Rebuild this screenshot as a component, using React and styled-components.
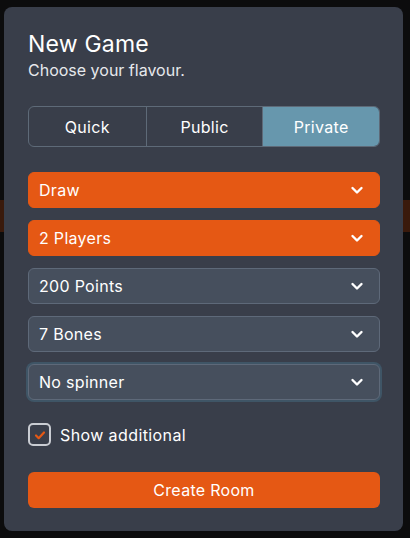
import React, { useState } from "react";
import styled, { createGlobalStyle } from "styled-components";

const GlobalStyle = createGlobalStyle`
    html, body {
        margin: 0;
        background: #0c0c0d;
        font-family: Inter, "Noto Sans", sans-serif;
    }
`;

const Backdrop = styled.div`
    width: 410px;
    height: 538px;
    padding: 7px 7px 7px 4px;
    box-sizing: border-box;
    background: linear-gradient(to bottom, transparent 200px, #3a1a0c 200px, #3a1a0c 232px, transparent 232px);
`;

const Modal = styled.div`
    background: #393e4a;
    border-radius: 8px;
    height: 524px;
    box-sizing: border-box;
    padding: 22px 23px 0 24px;
    display: flex;
    flex-direction: column;
    color: #fff;
`;

const Title = styled.h2`
    font-size: 23px;
    font-weight: 400;
    margin: 0;
    line-height: 30px;
    letter-spacing: 0.2px;
`;

const Subtitle = styled.p`
    font-size: 16px;
    color: #e6e8ec;
    margin: 0 0 25px 0;
    line-height: 22px;
`;

const Tabs = styled.div`
    display: grid;
    grid-template-columns: repeat(3, 1fr);
    border: 1px solid #5e6a78;
    border-radius: 6px;
    overflow: hidden;
    height: 41px;
    box-sizing: border-box;
    margin-bottom: 25px;
`;

const Tab = styled.button`
    border: none;
    border-left: ${p => (p.$first ? "none" : "1px solid #5e6a78")};
    background: ${p => (p.$active ? "#6797ad" : "transparent")};
    color: #fff;
    font-family: inherit;
    font-size: 16px;
    letter-spacing: 0.3px;
    cursor: pointer;
`;

const Fields = styled.div`
    display: flex;
    flex-direction: column;
    gap: 12px;
`;

const Select = styled.div`
    height: 36px;
    box-sizing: border-box;
    border-radius: 6px;
    padding: 0 15px 0 10px;
    display: flex;
    align-items: center;
    justify-content: space-between;
    font-size: 16px;
    letter-spacing: 0.3px;
    background: ${p => (p.$accent ? "#e55814" : "#464f5d")};
    border: 1px solid ${p => (p.$accent ? "#e55814" : "#5e6979")};
    box-shadow: ${p => (p.$focus ? "0 0 0 2px #3f5566" : "none")};
`;

const Check = styled.label`
    display: flex;
    align-items: center;
    gap: 9px;
    margin-top: 23px;
    font-size: 16px;
    letter-spacing: 0.4px;
`;

const Box = styled.span`
    width: 19px;
    height: 19px;
    border: 2px solid #c9ccd2;
    border-radius: 5px;
    display: flex;
    align-items: center;
    justify-content: center;
`;

const Button = styled.button`
    margin-top: 26px;
    height: 36px;
    border: none;
    border-radius: 6px;
    background: #e55814;
    color: #fff;
    font-family: inherit;
    font-size: 16px;
    letter-spacing: 0.3px;
`;

const Chevron = () => (
    <svg width="14" height="14" viewBox="0 0 14 14">
        <path d="M2.5 5l4.5 4.5L11.5 5" fill="none" stroke="#fff" strokeWidth="2.4" strokeLinecap="round" strokeLinejoin="round" />
    </svg>
);

const fields = [
    { label: "Draw", accent: true },
    { label: "2 Players", accent: true },
    { label: "200 Points" },
    { label: "7 Bones" },
    { label: "No spinner", focus: true },
];

const App = () => {
    const [mode, setMode] = useState("Private");
    return (
        <Backdrop>
            <GlobalStyle />
            <Modal>
                <Title>New Game</Title>
                <Subtitle>Choose your flavour.</Subtitle>
                <Tabs>
                    {["Quick", "Public", "Private"].map((t, i) => (
                        <Tab key={t} $first={i === 0} $active={mode === t} onClick={() => setMode(t)}>
                            {t}
                        </Tab>
                    ))}
                </Tabs>
                <Fields>
                    {fields.map(f => (
                        <Select key={f.label} $accent={f.accent} $focus={f.focus}>
                            {f.label}
                            <Chevron />
                        </Select>
                    ))}
                </Fields>
                <Check>
                    <Box>
                        <svg width="14" height="14" viewBox="0 0 14 14">
                            <path d="M3 7.5l2.7 2.7L11 4.5" fill="none" stroke="#e55814" strokeWidth="2.2" strokeLinecap="round" strokeLinejoin="round" />
                        </svg>
                    </Box>
                    Show additional
                </Check>
                <Button>Create Room</Button>
            </Modal>
        </Backdrop>
    );
};

export default App;
